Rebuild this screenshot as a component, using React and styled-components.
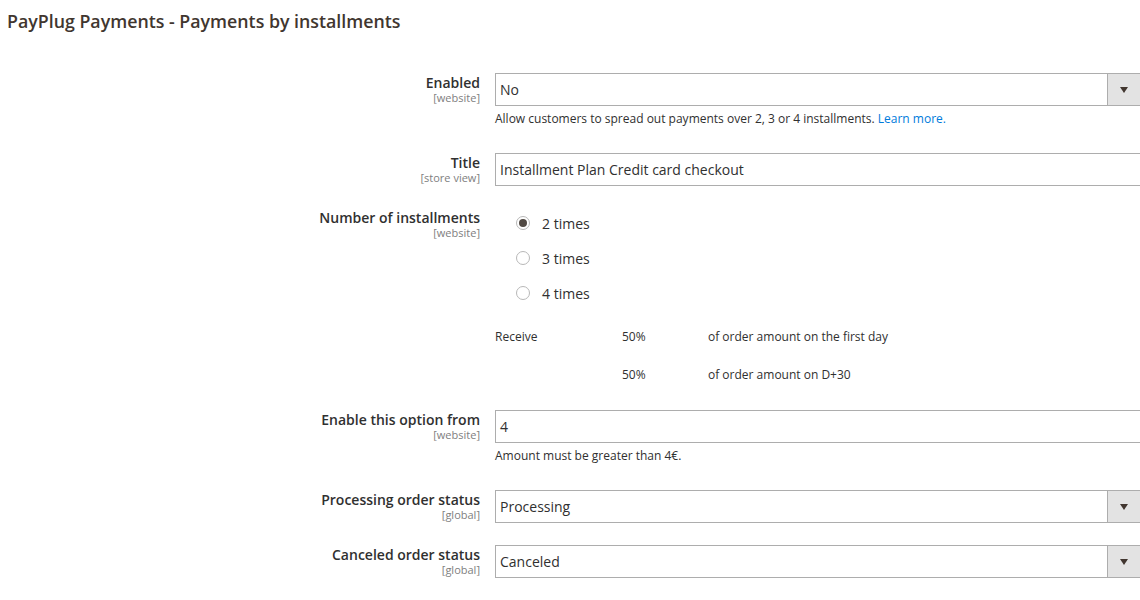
import styled, { createGlobalStyle } from "styled-components";

const GlobalStyle = createGlobalStyle`
  html, body {
    margin: 0;
    padding: 0;
    background: #ffffff;
    overflow: hidden;
  }
  body {
    font-family: "Open Sans", "Liberation Sans", sans-serif;
    color: #303030;
  }
`;

const Page = styled.div`
  width: 1140px;
  height: 600px;
  overflow: hidden;
`;

const SectionTitle = styled.h2`
  margin: 0;
  padding: 10px 0 0 7px;
  height: 73px;
  box-sizing: border-box;
  font-size: 17.8px;
  font-weight: 600;
  color: #41362f;
  line-height: 22px;
`;

const Row = styled.div`
  display: flex;
  align-items: flex-start;
  margin-bottom: 22px;
`;

const LabelCol = styled.div`
  width: 480px;
  flex-shrink: 0;
  text-align: right;
  padding-top: 1px;
`;

const LabelText = styled.div`
  font-size: 14px;
  font-weight: 600;
  line-height: 17px;
  color: #303030;
`;

const Scope = styled.div`
  font-size: 11px;
  line-height: 13px;
  color: #808080;
`;

const Control = styled.div`
  margin-left: 15px;
  width: 647px;
  flex-shrink: 0;
`;

const Field = styled.div`
  position: relative;
  height: 33px;
  box-sizing: border-box;
  border: 1px solid #adadad;
  background: #fff;
  display: flex;
  align-items: center;
  padding-left: 4px;
  font-size: 14px;
  color: #303030;
`;

const SelectButton = styled.div`
  position: absolute;
  top: 0;
  right: 0;
  bottom: 0;
  width: 31px;
  background: #e3e3e3;
  border-left: 1px solid #adadad;
  display: flex;
  align-items: center;
  justify-content: center;
  padding-right: 2px;

  &::after {
    content: "";
    border-left: 4px solid transparent;
    border-right: 4px solid transparent;
    border-top: 6px solid #41362f;
  }
`;

const Note = styled.div`
  margin-top: 5px;
  padding-bottom: 4px;
  font-size: 12px;
  line-height: 16px;
  color: #303030;

  a {
    color: #007bdb;
    text-decoration: none;
  }
`;

const RadioList = styled.div`
  padding: 5px 0 0 21px;
  display: flex;
  flex-direction: column;
  gap: 15px;
`;

const RadioItem = styled.label`
  display: flex;
  align-items: center;
  height: 20px;
  font-size: 14px;
  color: #303030;
`;

const RadioCircle = styled.span`
  width: 14px;
  height: 14px;
  box-sizing: border-box;
  border-radius: 50%;
  border: 1px solid #b8b8b8;
  background: #fff;
  margin-right: 12px;
  display: flex;
  align-items: center;
  justify-content: center;

  &::after {
    content: "";
    width: 8px;
    height: 8px;
    border-radius: 50%;
    background: ${(p) => (p.$checked ? "#514943" : "transparent")};
  }
`;

const Schedule = styled.div`
  margin-top: 24px;
  margin-bottom: 3px;
  display: grid;
  grid-template-columns: 127px 86px 1fr;
  row-gap: 18px;
  font-size: 12px;
  line-height: 20px;
  color: #303030;
`;

const FieldRow = ({ label, scope, children }) => (
  <Row>
    <LabelCol>
      <LabelText>{label}</LabelText>
      <Scope>[{scope}]</Scope>
    </LabelCol>
    <Control>{children}</Control>
  </Row>
);

const Select = ({ value }) => (
  <Field>
    {value}
    <SelectButton />
  </Field>
);

const options = [
  { label: "2 times", checked: true },
  { label: "3 times", checked: false },
  { label: "4 times", checked: false },
];

const App = () => {
  return (
    <Page>
      <GlobalStyle />
      <SectionTitle>PayPlug Payments - Payments by installments</SectionTitle>

      <FieldRow label="Enabled" scope="website">
        <Select value="No" />
        <Note>
          Allow customers to spread out payments over 2, 3 or 4 installments.{" "}
          <a href="#">Learn more.</a>
        </Note>
      </FieldRow>

      <FieldRow label="Title" scope="store view">
        <Field>Installment Plan Credit card checkout</Field>
      </FieldRow>

      <FieldRow label="Number of installments" scope="website">
        <RadioList>
          {options.map((o) => (
            <RadioItem key={o.label}>
              <RadioCircle $checked={o.checked} />
              {o.label}
            </RadioItem>
          ))}
        </RadioList>
        <Schedule>
          <span>Receive</span>
          <span>50%</span>
          <span>of order amount on the first day</span>
          <span />
          <span>50%</span>
          <span>of order amount on D+30</span>
        </Schedule>
      </FieldRow>

      <FieldRow label="Enable this option from" scope="website">
        <Field>4</Field>
        <Note>Amount must be greater than 4€.</Note>
      </FieldRow>

      <FieldRow label="Processing order status" scope="global">
        <Select value="Processing" />
      </FieldRow>

      <FieldRow label="Canceled order status" scope="global">
        <Select value="Canceled" />
      </FieldRow>
    </Page>
  );
};

export default App;
